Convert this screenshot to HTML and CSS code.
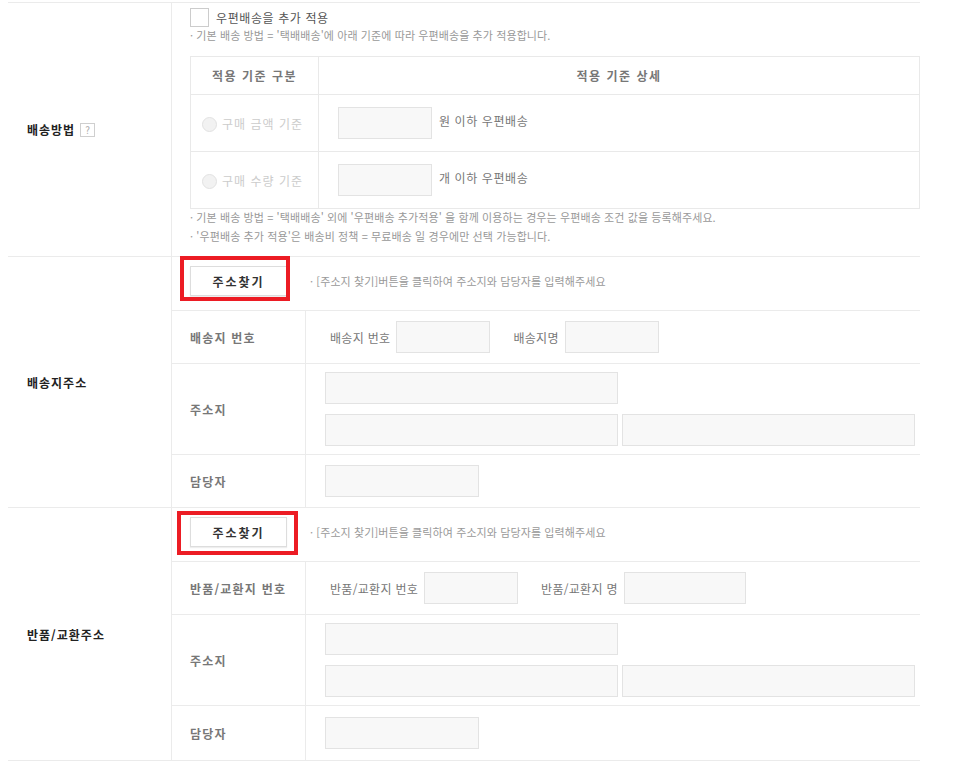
FILE: index.html
```html
<!DOCTYPE html>
<html lang="ko">

<head>
    <meta charset="utf-8">
    <link rel="stylesheet" href="styles.css">
</head>

<body>
    <div class="form">
        <!-- 배송방법 -->
        <div class="section">
            <div class="section-label">배송방법 <span class="help">?</span></div>
            <div class="section-body pad">
                <label class="check-row">
                    <span class="checkbox"></span>
                    <span>우편배송을 추가 적용</span>
                </label>
                <p class="note">· 기본 배송 방법 = '택배배송'에 아래 기준에 따라 우편배송을 추가 적용합니다.</p>
                <table class="rule-table">
                    <thead>
                        <tr>
                            <th class="col-kind">적용 기준 구분</th>
                            <th>적용 기준 상세</th>
                        </tr>
                    </thead>
                    <tbody>
                        <tr>
                            <td class="col-kind"><span class="radio"></span>구매 금액 기준</td>
                            <td class="detail"><input class="field w93" type="text"> 원 이하 우편배송</td>
                        </tr>
                        <tr>
                            <td class="col-kind"><span class="radio"></span>구매 수량 기준</td>
                            <td class="detail"><input class="field w93" type="text"> 개 이하 우편배송</td>
                        </tr>
                    </tbody>
                </table>
                <p class="note">· 기본 배송 방법 = '택배배송' 외에 '우편배송 추가적용' 을 함께 이용하는 경우는 우편배송 조건 값을 등록해주세요.</p>
                <p class="note">· '우편배송 추가 적용'은 배송비 정책 = 무료배송 일 경우에만 선택 가능합니다.</p>
            </div>
        </div>

        <!-- 배송지주소 -->
        <div class="section">
            <div class="section-label">배송지주소</div>
            <div class="section-body">
                <div class="row btn-row">
                    <button class="btn-find" type="button">주소찾기</button>
                    <span class="hint">· [주소지 찾기]버튼을 클릭하여 주소지와 담당자를 입력해주세요</span>
                    <span class="mark mark-a"></span>
                </div>
                <div class="row">
                    <div class="sub-label">배송지 번호</div>
                    <div class="value inline">
                        배송지 번호 <input class="field w93" type="text">
                        <span class="gap"></span>
                        배송지명 <input class="field w93" type="text">
                    </div>
                </div>
                <div class="row tall">
                    <div class="sub-label">주소지</div>
                    <div class="value stack">
                        <input class="field w292" type="text">
                        <div class="pair">
                            <input class="field w292" type="text">
                            <input class="field w292" type="text">
                        </div>
                    </div>
                </div>
                <div class="row">
                    <div class="sub-label">담당자</div>
                    <div class="value"><input class="field w153" type="text"></div>
                </div>
            </div>
        </div>

        <!-- 반품/교환주소 -->
        <div class="section">
            <div class="section-label">반품/교환주소</div>
            <div class="section-body">
                <div class="row btn-row">
                    <button class="btn-find" type="button">주소찾기</button>
                    <span class="hint">· [주소지 찾기]버튼을 클릭하여 주소지와 담당자를 입력해주세요</span>
                    <span class="mark mark-b"></span>
                </div>
                <div class="row">
                    <div class="sub-label">반품/교환지 번호</div>
                    <div class="value inline">
                        반품/교환지 번호 <input class="field w93" type="text">
                        <span class="gap"></span>
                        반품/교환지 명 <input class="field w121" type="text">
                    </div>
                </div>
                <div class="row tall">
                    <div class="sub-label">주소지</div>
                    <div class="value stack">
                        <input class="field w292" type="text">
                        <div class="pair">
                            <input class="field w292" type="text">
                            <input class="field w292" type="text">
                        </div>
                    </div>
                </div>
                <div class="row last">
                    <div class="sub-label">담당자</div>
                    <div class="value"><input class="field w153" type="text"></div>
                </div>
            </div>
        </div>
    </div>
</body>

</html>
```

FILE: styles.css
```css
* {
    box-sizing: border-box;
}

html,
body {
    margin: 0;
    background-color: #fff;
    font-family: "Noto Sans CJK KR", "Noto Sans", sans-serif;
    font-size: 12px;
    color: #666;
}

.form {
    width: 912px;
    margin: 2px 0 0 8px;
    border-top: 1px solid #ebebeb;
}

.section {
    display: flex;
    border-bottom: 1px solid #ebebeb;
}

.section-label {
    width: 164px;
    flex: none;
    display: flex;
    align-items: center;
    padding-left: 19px;
    border-right: 1px solid #ebebeb;
    font-weight: bold;
    color: #222;
    letter-spacing: 1px;
}

.help {
    display: inline-block;
    width: 15px;
    height: 14px;
    margin-left: 5px;
    border: 1px solid #cfcfcf;
    color: #aaa;
    font-size: 10px;
    font-weight: normal;
    line-height: 12px;
    text-align: center;
    letter-spacing: 0;
}

.section-body {
    flex: 1;
}

.section-body.pad {
    padding: 5px 0 10px 18px;
}

.check-row {
    display: flex;
    align-items: center;
    gap: 7px;
    height: 19px;
    color: #555;
    letter-spacing: 0.6px;
}

.checkbox {
    width: 19px;
    height: 19px;
    border: 1px solid #ccc;
    background: #fff;
}

.note {
    margin: 0;
    font-size: 11px;
    line-height: 19px;
    color: #999;
    letter-spacing: 0.1px;
}

.check-row + .note {
    line-height: 16px;
    margin-bottom: 13px;
}

.rule-table + .note {
    margin-top: -1px;
}

/* 적용 기준 table */
.rule-table {
    width: 730px;
    border-collapse: collapse;
    border: 1px solid #e9e9e9;
}

.rule-table th {
    height: 38px;
    font-weight: bold;
    color: #777;
    text-align: center;
    letter-spacing: 1.5px;
    border: 1px solid #e9e9e9;
}

.rule-table td {
    height: 57px;
    border: 1px solid #e9e9e9;
}

.rule-table .col-kind {
    width: 128px;
}

td.col-kind {
    padding-left: 11px;
    color: #ccc;
    letter-spacing: 1px;
}

.radio {
    display: inline-block;
    width: 15px;
    height: 15px;
    margin-right: 5px;
    vertical-align: -3px;
    border: 1px solid #e2e2e2;
    border-radius: 50%;
    background: #f2f2f2;
}

td.detail {
    padding-left: 19px;
    color: #777;
    letter-spacing: 0.6px;
}

td.detail .field {
    margin-right: 3px;
    vertical-align: middle;
}

/* address rows */
.row {
    position: relative;
    display: flex;
    height: 53px;
    border-bottom: 1px solid #ebebeb;
}

.row.tall {
    height: 91px;
}

.section-body .row:last-child {
    border-bottom: 0;
    height: 52px;
}

.section-body .row.last {
    height: 54px;
}

.btn-row {
    height: 54px;
    align-items: flex-start;
    padding: 9px 0 0 18px;
}

.btn-find {
    width: 97px;
    height: 30px;
    border: 1px solid #ddd;
    background: #fff;
    box-shadow: 0 1px 1px #eee;
    font-family: inherit;
    font-size: 12px;
    font-weight: bold;
    color: #333;
    letter-spacing: 2px;
    cursor: pointer;
}

.hint {
    margin: 7px 0 0 23px;
    font-size: 11px;
    color: #999;
    letter-spacing: 0.1px;
}

/* red highlight drawn over the button */
.mark {
    position: absolute;
    border: 4px solid #ec1c24;
    pointer-events: none;
}

.mark-a {
    left: 8px;
    top: -1px;
    width: 110px;
    height: 45px;
}

.mark-b {
    left: 5px;
    top: 3px;
    width: 121px;
    height: 44px;
}

.sub-label {
    width: 134px;
    flex: none;
    display: flex;
    align-items: center;
    padding-left: 18px;
    border-right: 1px solid #ebebeb;
    font-weight: bold;
    color: #777;
    letter-spacing: 1.2px;
}

.value {
    display: flex;
    align-items: center;
    padding-left: 19px;
}

.value.inline {
    padding-left: 24px;
    gap: 6px;
    color: #777;
    letter-spacing: 0.3px;
}

.gap {
    width: 11px;
}

.value.stack {
    flex-direction: column;
    align-items: flex-start;
    justify-content: center;
    gap: 10px;
}

.pair {
    display: flex;
    gap: 4px;
}

.field {
    height: 32px;
    border: 1px solid #e3e3e3;
    background: #f8f8f8;
    font-family: inherit;
    outline: none;
}

.w93 {
    width: 94px;
}

.w121 {
    width: 122px;
}

.w153 {
    width: 154px;
}

.w292 {
    width: 293px;
}
```
